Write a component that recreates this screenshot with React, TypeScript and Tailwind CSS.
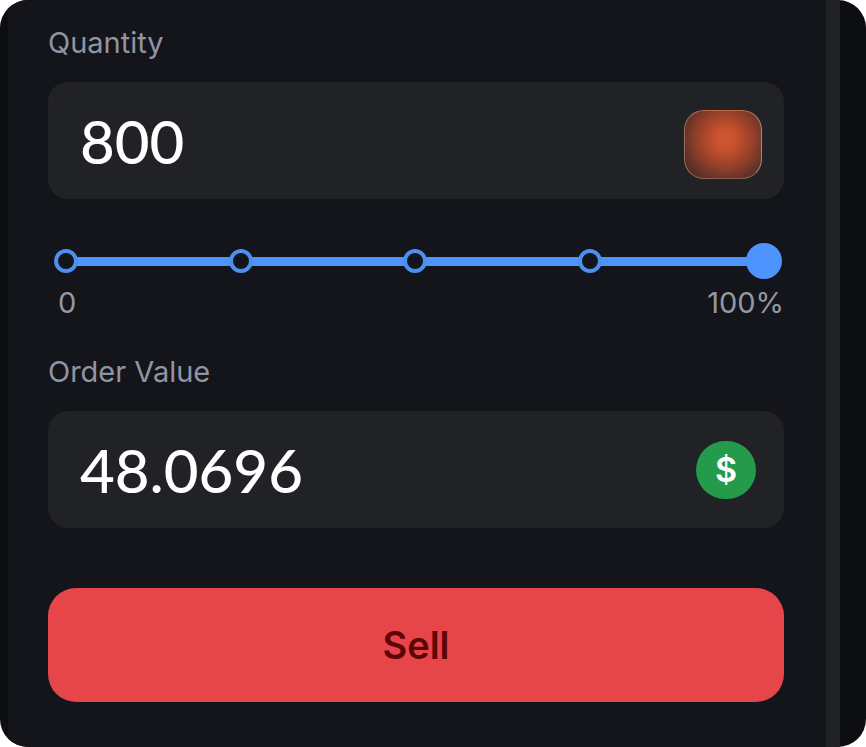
import { useState } from 'react'

type AmountFieldProps = {
  id: string
  label: string
  value: string
  onChange: (value: string) => void
  children: React.ReactNode
}

function AmountField({ id, label, value, onChange, children }: AmountFieldProps) {
  return (
    <div className="flex flex-col gap-[21px]">
      <label htmlFor={id} className="text-[29px] leading-9 text-[#9094a3]">
        {label}
      </label>
      <div className="flex h-[117px] items-center rounded-[20px] bg-[#212226] pl-8 pr-[22px]">
        <input
          id={id}
          type="text"
          inputMode="decimal"
          value={value}
          onChange={(e) => onChange(e.target.value)}
          className="w-full min-w-0 flex-1 bg-transparent font-['Lato',sans-serif] text-[60px] font-medium leading-[72px] text-white focus:outline-none"
        />
        {children}
      </div>
    </div>
  )
}

type PercentSliderProps = {
  value: number
  onChange: (value: number) => void
}

function PercentSlider({ value, onChange }: PercentSliderProps) {
  return (
    <div className="flex flex-col gap-1.5">
      <div className="relative mr-0.5 flex h-9 items-center justify-between px-1.5">
        <div className="absolute inset-x-4 h-[9px] rounded-full bg-[#4d94ff]" />
        {[0, 25, 50, 75, 100].map((stop) => (
          <span
            key={stop}
            className="relative size-6 rounded-full border-4 border-[#4d8ff0] bg-[#14151a]"
          />
        ))}
        <input
          type="range"
          min={0}
          max={100}
          value={value}
          aria-label="Percent of balance"
          onChange={(e) => onChange(Number(e.target.value))}
          className="absolute inset-0 h-9 w-full cursor-pointer appearance-none bg-transparent focus:outline-none [&::-webkit-slider-thumb]:size-9 [&::-webkit-slider-thumb]:appearance-none [&::-webkit-slider-thumb]:rounded-full [&::-webkit-slider-thumb]:bg-[#4d94ff]"
        />
      </div>
      <div className="flex justify-between pl-2.5 text-[29px] leading-9 text-[#9697a0]">
        <span>0</span>
        <span>100%</span>
      </div>
    </div>
  )
}

export default function App() {
  const [quantity, setQuantity] = useState('800')
  const [orderValue, setOrderValue] = useState('48.0696')
  const [percent, setPercent] = useState(100)

  return (
    <div className="bg-white font-['Inter',sans-serif]">
      <div className="flex overflow-hidden rounded-[28px] bg-[#0d0e12]">
        <form
          className="ml-2 flex flex-1 flex-col bg-[#14151a] pb-[45px] pl-10 pr-[42px] pt-[25px]"
          onSubmit={(e) => e.preventDefault()}
        >
          <AmountField
            id="quantity"
            label="Quantity"
            value={quantity}
            onChange={setQuantity}
          >
            <span className="mt-2 h-[69px] w-[78px] rounded-[20px] border border-t-[#c06a4a] border-r-[#b08478] border-b-[#8a5f53] border-l-[#93705f] bg-[radial-gradient(circle_at_53%_42%,#d0562f_0%,#c9522d_18%,#95402a_50%,#5c3028_78%,#38272a_100%)]" />
          </AmountField>
          <div className="mb-[33px] mt-11">
            <PercentSlider value={percent} onChange={setPercent} />
          </div>
          <AmountField
            id="order-value"
            label="Order Value"
            value={orderValue}
            onChange={setOrderValue}
          >
            <span className="mr-1.5 flex h-[58px] w-[60px] items-center justify-center rounded-full bg-[#249b4b] text-[34px] font-semibold text-white">
              $
            </span>
          </AmountField>
          <button
            type="submit"
            className="mt-[60px] h-[114px] rounded-[28px] bg-[#e6464a] text-[38px] font-semibold text-[#5f0508]"
          >
            Sell
          </button>
        </form>
        <div className="w-3.5 bg-[#212226]" />
        <div className="w-[26px]" />
      </div>
    </div>
  )
}
